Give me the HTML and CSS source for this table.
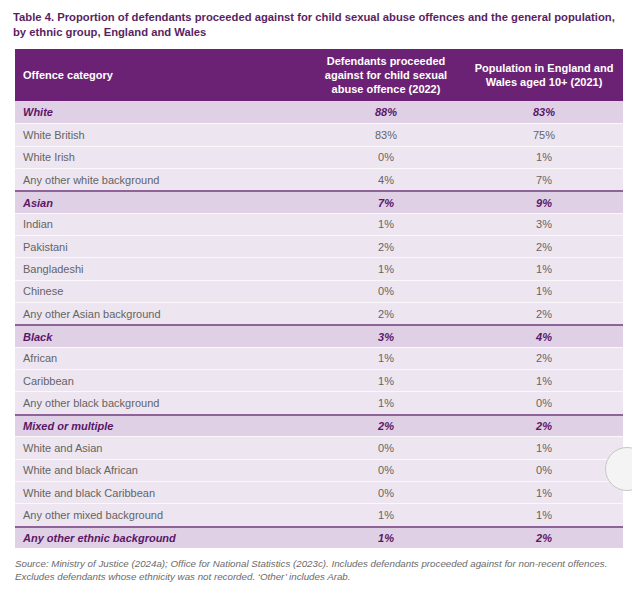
FILE: index.html
```html
<!DOCTYPE html>
<html lang="en">
<head>
<meta charset="utf-8">
<title>Table 4</title>
<link rel="stylesheet" href="styles.css">
</head>
<body>
<div class="page">
  <h1 class="title">Table 4. Proportion of defendants proceeded against for child sexual abuse offences and the general population,<br>by ethnic group, England and Wales</h1>
  <div class="table">
    <div class="row head">
      <div class="cell c1">Offence category</div>
      <div class="cell num">Defendants proceeded<br>against for child sexual<br>abuse offence (2022)</div>
      <div class="cell num">Population in England and<br>Wales aged 10+ (2021)</div>
    </div>
    <div class="row group first"><div class="cell c1">White</div><div class="cell num">88%</div><div class="cell num">83%</div></div>
    <div class="row"><div class="cell c1">White British</div><div class="cell num">83%</div><div class="cell num">75%</div></div>
    <div class="row"><div class="cell c1">White Irish</div><div class="cell num">0%</div><div class="cell num">1%</div></div>
    <div class="row"><div class="cell c1">Any other white background</div><div class="cell num">4%</div><div class="cell num">7%</div></div>
    <div class="row group"><div class="cell c1">Asian</div><div class="cell num">7%</div><div class="cell num">9%</div></div>
    <div class="row"><div class="cell c1">Indian</div><div class="cell num">1%</div><div class="cell num">3%</div></div>
    <div class="row"><div class="cell c1">Pakistani</div><div class="cell num">2%</div><div class="cell num">2%</div></div>
    <div class="row"><div class="cell c1">Bangladeshi</div><div class="cell num">1%</div><div class="cell num">1%</div></div>
    <div class="row"><div class="cell c1">Chinese</div><div class="cell num">0%</div><div class="cell num">1%</div></div>
    <div class="row"><div class="cell c1">Any other Asian background</div><div class="cell num">2%</div><div class="cell num">2%</div></div>
    <div class="row group"><div class="cell c1">Black</div><div class="cell num">3%</div><div class="cell num">4%</div></div>
    <div class="row"><div class="cell c1">African</div><div class="cell num">1%</div><div class="cell num">2%</div></div>
    <div class="row"><div class="cell c1">Caribbean</div><div class="cell num">1%</div><div class="cell num">1%</div></div>
    <div class="row"><div class="cell c1">Any other black background</div><div class="cell num">1%</div><div class="cell num">0%</div></div>
    <div class="row group"><div class="cell c1">Mixed or multiple</div><div class="cell num">2%</div><div class="cell num">2%</div></div>
    <div class="row"><div class="cell c1">White and Asian</div><div class="cell num">0%</div><div class="cell num">1%</div></div>
    <div class="row"><div class="cell c1">White and black African</div><div class="cell num">0%</div><div class="cell num">0%</div></div>
    <div class="row"><div class="cell c1">White and black Caribbean</div><div class="cell num">0%</div><div class="cell num">1%</div></div>
    <div class="row"><div class="cell c1">Any other mixed background</div><div class="cell num">1%</div><div class="cell num">1%</div></div>
    <div class="row group"><div class="cell c1">Any other ethnic background</div><div class="cell num">1%</div><div class="cell num">2%</div></div>
  </div>
  <p class="source">Source: Ministry of Justice (2024a); Office for National Statistics (2023c). Includes defendants proceeded against for non-recent offences.<br>Excludes defendants whose ethnicity was not recorded. ‘Other’ includes Arab.</p>
</div>
<div class="scroll-handle"><div class="scroll-circle"></div></div>
</body>
</html>
```

FILE: styles.css
```css
html, body {
  margin: 0;
  padding: 0;
  background: #ffffff;
}
body {
  font-family: "Liberation Sans", Arial, sans-serif;
  width: 640px;
  height: 592px;
  overflow: hidden;
  position: relative;
}
.page {
  padding: 10px 0 0 13px;
}
.title {
  margin: 0;
  font-size: 11.25px;
  line-height: 15px;
  font-weight: bold;
  color: #5a1f63;
  white-space: nowrap;
}
.table {
  margin: 9px 0 0 2px;
  width: 608px;
}
.row {
  display: grid;
  grid-template-columns: 292px 158px 158px;
  height: 22.35px;
  box-sizing: border-box;
  background: #ede6f1;
  border-top: 1px solid #fbf8fc;
  font-size: 11px;
  color: #646464;
}
.cell {
  display: flex;
  align-items: center;
}
.c1 {
  padding-left: 8px;
}
.num {
  justify-content: center;
  text-align: center;
}
.row.head {
  height: 52px;
  background: #6c2274;
  border-top: none;
  color: #ffffff;
  font-weight: bold;
  line-height: 14px;
}
.row.group {
  background: #dfd0e6;
  border-top: 2px solid #8e6397;
  color: #5b1766;
  font-weight: bold;
  font-style: italic;
}
.row.group.first {
  border-top: none;
}
.source {
  margin: 9px 0 0 2px;
  font-size: 9.75px;
  line-height: 13px;
  font-style: italic;
  color: #6a6a6a;
  white-space: nowrap;
}
.scroll-handle {
  position: absolute;
  left: 605px;
  top: 447px;
  width: 27px;
  height: 46px;
  overflow: hidden;
}
.scroll-circle {
  width: 44px;
  height: 44px;
  box-sizing: border-box;
  border-radius: 50%;
  border: 1.5px solid #c6c6c6;
  background: #f4f4f4;
}
```
